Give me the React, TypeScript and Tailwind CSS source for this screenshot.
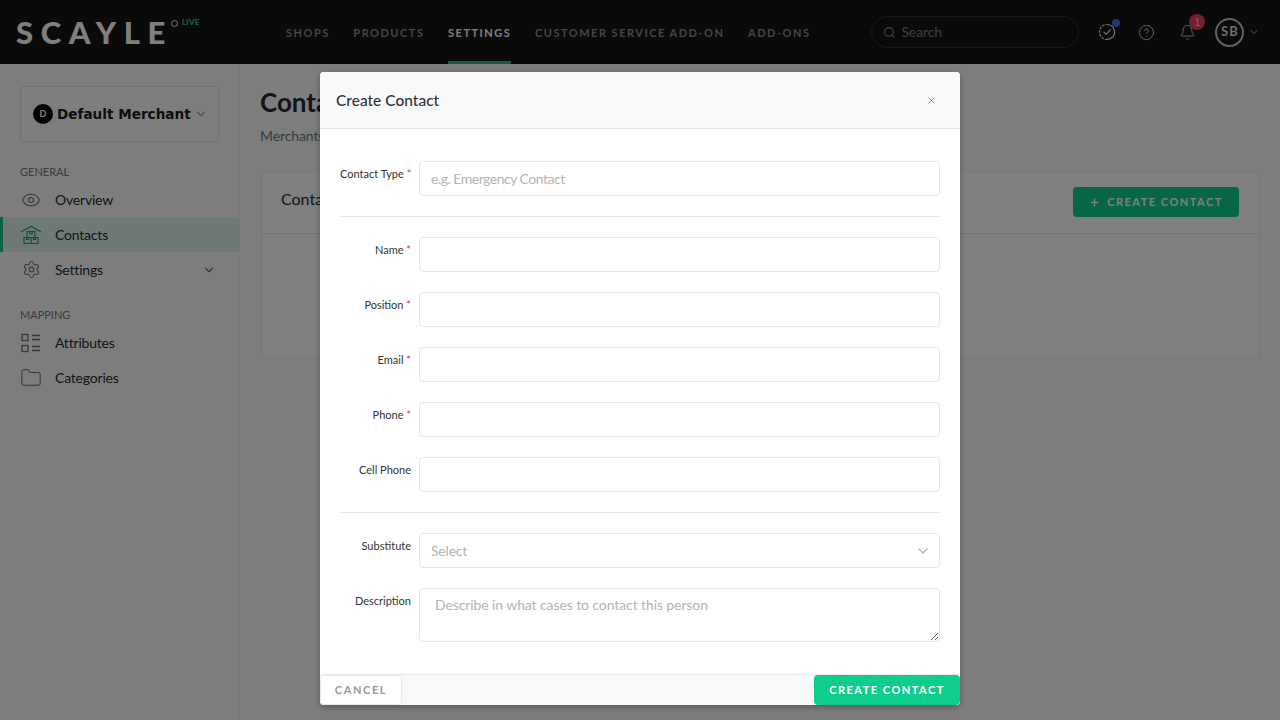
import React from "react";
import { Eye, Settings, ChevronDown, CircleHelp, Bell, Search, X, Plus, Folder } from "lucide-react";

function Logo() {
  return (
    <div className="flex items-start">
      <span className="text-[31px] leading-[32px] font-black tracking-[7.6px] text-white">SCAYLE</span>
      <span className="-ml-[2px] mt-[4px] w-[7px] h-[7px] rounded-full border border-white shrink-0" />
      <span className="ml-[4px] mt-[1px] text-[8px] leading-[10px] font-bold tracking-[0.3px] text-[#12d08f]">LIVE</span>
    </div>
  );
}

function TaskIcon() {
  return (
    <svg width="18" height="18" viewBox="0 0 18 18" fill="none" stroke="#e8e8e8" strokeWidth="1.2" strokeLinecap="round" strokeLinejoin="round">
      <path d="M9 1.5a7.5 7.5 0 0 1 4 13.8 7.5 7.5 0 0 1-4 1.2" />
      <path d="M9 16.5a7.5 7.5 0 0 1-7.5-7.5A7.5 7.5 0 0 1 9 1.5" strokeDasharray="1.6 2.2" />
      <path d="M6 9.2l2.1 2.1L12.2 7" />
    </svg>
  );
}

function ContactsIcon() {
  return (
    <svg width="22" height="20" viewBox="0 0 22 20" fill="none" stroke="#12a873" strokeWidth="1.2">
      <path d="M1 6.8 11 1.5l10 5.3" />
      <path d="M7 6.5h8v6H7zM9.8 6.5v2.4h2.4V6.5" />
      <path d="M4 12.5h7v6H4zM11 12.5h7v6h-7zM6.5 12.5v2h2v-2M13.5 12.5v2h2v-2" />
    </svg>
  );
}

function AttributesIcon() {
  return (
    <svg width="20" height="20" viewBox="0 0 20 20" fill="none" stroke="#6e6e6e" strokeWidth="1.3">
      <rect x="1" y="1.5" width="6" height="6" />
      <rect x="1" y="12.5" width="6" height="6" />
      <path d="M11 2.5h8M11 6.5h8M11 13.5h8M11 17.5h8" />
    </svg>
  );
}

function NavItem({ icon, label, active, chevron }: { icon: React.ReactNode; label: string; active?: boolean; chevron?: boolean }) {
  return (
    <div className={`h-[35px] flex items-center pl-5 pr-[23px] relative ${active ? "bg-[#dff3ea]" : ""}`}>
      {active && <span className="absolute left-0 top-0 bottom-0 w-[3px] bg-[#12c486]" />}
      <span className="w-[22px] flex justify-center">{icon}</span>
      <span className="ml-[13px] text-[14px] tracking-[-0.2px] text-[#222b33] flex-1">{label}</span>
      {chevron && <ChevronDown size={14} color="#6e6e6e" />}
    </div>
  );
}

function Label({ text, required }: { text: string; required?: boolean }) {
  return (
    <div className="w-[71px] shrink-0 text-right text-[11px] leading-[16px] text-[#333] pt-[5px] whitespace-nowrap">
      {text}
      {required && <span className="text-[#e0354f]"> *</span>}
    </div>
  );
}

function Field({ label, required }: { label: string; required?: boolean }) {
  return (
    <div className="flex gap-[8px]">
      <Label text={label} required={required} />
      <input className="flex-1 h-[35px] border border-[#e6e6e6] rounded-[4px] px-[11px] text-[14px] outline-none" />
    </div>
  );
}

export default function App() {
  return (
    <div className="relative h-screen w-full overflow-hidden bg-[#fbfbfb] font-['Lato','Liberation_Sans',sans-serif]">
      <header className="h-16 bg-[#141414] flex items-center">
        <div className="w-[286px] pl-[16px] shrink-0 pb-[1px]">
          <Logo />
        </div>
        <nav className="flex gap-[23.6px] h-full shrink-0 whitespace-nowrap text-[11px] font-bold tracking-[1.5px] text-[#8c8c8c]">
          <span className="flex items-center pt-[2px]">SHOPS</span>
          <span className="flex items-center pt-[2px]">PRODUCTS</span>
          <span className="flex items-center text-white border-b-[3px] border-[#12c486] pt-[5px]">SETTINGS</span>
          <span className="flex items-center pt-[2px]">CUSTOMER SERVICE ADD-ON</span>
          <span className="flex items-center pt-[2px]">ADD-ONS</span>
        </nav>
        <div className="ml-[61px] w-[208px] h-[32px] shrink-0 rounded-full border border-[#333] flex items-center pl-[11px] gap-[5px]">
          <Search size={13} color="#8c8c8c" />
          <span className="text-[14px] leading-[20px] pb-[1px] tracking-[-0.1px] text-[#7c7c7c]">Search</span>
        </div>
        <div className="relative ml-[19px] w-[18px] h-[18px] shrink-0">
          <TaskIcon />
          <span className="absolute -top-[4px] -right-[4px] w-[8px] h-[8px] rounded-full bg-[#3f70e8]" />
        </div>
        <div className="ml-[22px] shrink-0">
          <CircleHelp size={17} color="#c4c4c4" strokeWidth={1.4} />
        </div>
        <div className="relative ml-[24px] shrink-0">
          <Bell size={17} color="#c4c4c4" strokeWidth={1.4} />
          <span className="absolute -top-[10px] left-[10px] w-[16px] h-[16px] rounded-full bg-[#e5405e] text-[#f0d0d6] text-[11px] leading-[16px] text-center">1</span>
        </div>
        <div className="ml-[19px] w-[29px] h-[29px] shrink-0 rounded-full border-2 border-[#c4c4c4] flex items-center justify-center text-[13px] font-bold tracking-[1px] text-[#d8d8d8]">
          SB
        </div>
        <ChevronDown size={12} color="#b0b0b0" className="ml-[4px] shrink-0" />
      </header>

      <div className="flex h-[656px]">
        <aside className="w-[240px] shrink-0 border-r border-[#eeeeee] pt-[22px]">
          <div className="mx-5 w-[199px] h-[56px] border border-[#e2e2e2] rounded-[4px] flex items-center pl-[12px]">
            <span className="w-[20px] h-[20px] rounded-full bg-black text-white text-[9px] font-bold flex items-center justify-center shrink-0">D</span>
            <span className="ml-[4px] text-[13.6px] font-semibold whitespace-nowrap text-[#1a1a1a] font-['DejaVu_Sans',sans-serif]">Default Merchant</span>
            <ChevronDown size={14} color="#9a9a9a" className="ml-[3px] shrink-0" />
          </div>
          <div className="mt-[23px] pl-5 text-[11px] leading-[14px] text-[#777]">GENERAL</div>
          <div className="mt-[3px]">
            <NavItem icon={<Eye size={20} color="#6e6e6e" strokeWidth={1.3} />} label="Overview" />
            <NavItem icon={<ContactsIcon />} label="Contacts" active />
            <NavItem icon={<Settings size={19} color="#6e6e6e" strokeWidth={1.3} />} label="Settings" chevron />
          </div>
          <div className="mt-[21px] pl-5 text-[11px] leading-[14px] text-[#777]">MAPPING</div>
          <div className="mt-[3px]">
            <NavItem icon={<AttributesIcon />} label="Attributes" />
            <NavItem icon={<Folder size={22} color="#6e6e6e" strokeWidth={1.1} />} label="Categories" />
          </div>
        </aside>

        <main className="flex-1 pl-5 pr-5 pt-[20px]">
          <h1 className="text-[26px] leading-[36px] font-bold text-[#222b33]">Contacts</h1>
          <div className="mt-[7px] text-[14px] leading-[18px] tracking-[-0.1px] text-[#6e7780]">Merchants</div>
          <section className="mt-[26px] h-[188px] bg-white border border-[#eeeeee] rounded-[4px] ml-[1px]">
            <div className="h-[62px] border-b border-[#e8e8e8] flex items-start justify-between pl-[19px] pr-5 pt-[15px]">
              <span className="text-[16px] leading-[24px] text-[#222b33]">Contacts</span>
              <button className="w-[166px] h-[30px] rounded-[4px] bg-[#0fcd8c] text-white text-[11px] font-bold tracking-[1.5px] flex items-center justify-center gap-[7px]">
                <Plus size={11} strokeWidth={3} />
                CREATE CONTACT
              </button>
            </div>
          </section>
        </main>
      </div>

      <div className="absolute inset-0 bg-black/50 flex justify-center items-start pt-[72px]">
        <div className="w-[640px] h-[633px] bg-white rounded-[4px] shadow-[0_2px_6px_rgba(0,0,0,0.3)] flex flex-col overflow-hidden">
          <div className="h-[57px] shrink-0 bg-[#f8f9fb] border-b border-[#e9e9e9] flex items-center justify-between pl-4 pr-[23px]">
            <span className="text-[15.5px] font-medium text-[#333] pt-[2px]">Create Contact</span>
            <X size={11} color="#888" />
          </div>
          <div className="flex-1 px-5 pt-[32px]">
            <div className="flex gap-[8px]">
              <Label text="Contact Type" required />
              <input
                placeholder="e.g. Emergency Contact"
                className="flex-1 h-[35px] border border-[#e6e6e6] rounded-[4px] px-[11px] text-[14px] tracking-[-0.5px] outline-none placeholder:text-[#b4b4b4]"
              />
            </div>
            <div className="h-px bg-[#e9e9e9] mt-[20px] mb-[20px]" />
            <div className="flex flex-col gap-[20px]">
              <Field label="Name" required />
              <Field label="Position" required />
              <Field label="Email" required />
              <Field label="Phone" required />
              <Field label="Cell Phone" />
            </div>
            <div className="h-px bg-[#e9e9e9] mt-[20px] mb-[20px]" />
            <div className="flex gap-[8px]">
              <Label text="Substitute" />
              <div className="flex-1 h-[35px] border border-[#e6e6e6] rounded-[4px] pl-[11px] pr-[8px] flex items-center justify-between text-[14px] tracking-[-0.2px] text-[#b4b4b4]">
                Select
                <ChevronDown size={16} color="#b4b4b4" />
              </div>
            </div>
            <div className="flex gap-[8px] mt-[20px]">
              <Label text="Description" />
              <textarea
                placeholder="Describe in what cases to contact this person"
                className="flex-1 h-[54px] border border-[#e6e6e6] rounded-[4px] px-[15px] py-[6px] text-[14px] tracking-[-0.1px] leading-[20px] outline-none placeholder:text-[#b4b4b4]"
              />
            </div>
          </div>
          <div className="h-[31px] shrink-0 bg-[#f8f9fb] border-t border-[#e9e9e9] flex justify-between">
            <button className="w-[82px] h-[30px] bg-white border border-[#e9e9e9] rounded-[4px] text-[11px] font-bold tracking-[1.6px] text-[#9a9a9a]">CANCEL</button>
            <button className="w-[146px] h-[30px] bg-[#0fcd8c] rounded-[4px] text-white text-[11px] font-bold tracking-[1.5px]">CREATE CONTACT</button>
          </div>
        </div>
      </div>
    </div>
  );
}
